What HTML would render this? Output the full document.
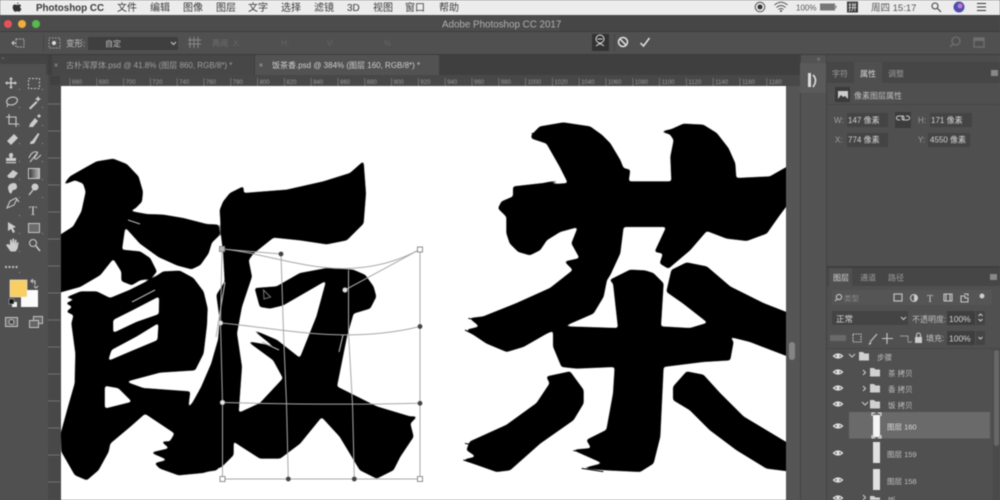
<!DOCTYPE html>
<html lang="zh">
<head>
<meta charset="utf-8">
<title>Adobe Photoshop CC 2017</title>
<style>
html,body{margin:0;padding:0;width:1000px;height:500px;overflow:hidden;background:#535353}
svg{display:block;filter:blur(.55px)}
text{font-family:"Liberation Sans","Noto Sans CJK SC",sans-serif;font-size:8.5px;fill:#c0c0c0}
.m{font-size:10px;fill:#3a3a3a}
.d{fill:#8a8a8a}
.r{font-size:6px;fill:#9a9a9a}
.i{fill:none;stroke:#c8c8c8;stroke-width:1.1}
.f{fill:#cccccc}
.e{fill:none;stroke:#e0e0e0;stroke-width:1.2}
</style>
</head>
<body>
<svg width="1000" height="500" viewBox="0 0 1000 500" xmlns="http://www.w3.org/2000/svg">
<defs>
<g id="eye"><path class="e" d="M-4.500 0Q0 -4 4.500 0Q0 4 -4.500 0Z"/><circle r="1.600" fill="#e0e0e0"/></g>
<g id="folder"><path fill="#d0d0d0" d="M0 0h4l1.500 1.500H10v7H0Z"/></g>
<clipPath id="cv"><rect x="61" y="86" width="725" height="414"/></clipPath>
<linearGradient id="g1" x1="0" x2="1"><stop offset="0" stop-color="#333"/><stop offset="1" stop-color="#bbb"/></linearGradient>
<filter id="ink" filterUnits="userSpaceOnUse" x="40" y="70" width="770" height="450" color-interpolation-filters="sRGB">
 <feGaussianBlur stdDeviation="1.300"/>
 <feComponentTransfer>
  <feFuncR type="linear" slope="4" intercept="-1.500"/>
  <feFuncG type="linear" slope="4" intercept="-1.500"/>
  <feFuncB type="linear" slope="4" intercept="-1.500"/>
 </feComponentTransfer>
</filter>
</defs>

<!-- base -->
<rect width="1000" height="500" fill="#535353"/>

<!-- menu bar -->
<rect width="1000" height="15" fill="#ececec"/>
<path fill="#333" d="M17 3.500c.8-.9 1.300-1 1.500-1.300 .1 1-.5 1.700-1.300 1.900ZM14.800 4.500c1 0 1.500.5 2.300.5s1.300-.5 2.300-.5c.7 0 1.300.3 1.700.9-1.400.9-1.200 2.900.3 3.500-.4 1.200-1.300 2.800-2.300 2.800-.7 0-1-.4-1.900-.4s-1.200.4-1.900.4c-1.300 0-2.600-2.500-2.600-4.300 0-1.900 1.100-3 2.100-3Z"/>
<text x="36" y="11" class="m" style="font-weight:bold;font-size:9.800px">Photoshop CC</text>
<text x="117" y="11" class="m">文件</text>
<text x="150" y="11" class="m">编辑</text>
<text x="183" y="11" class="m">图像</text>
<text x="216" y="11" class="m">图层</text>
<text x="248" y="11" class="m">文字</text>
<text x="281" y="11" class="m">选择</text>
<text x="314" y="11" class="m">滤镜</text>
<text x="347" y="11" class="m">3D</text>
<text x="373" y="11" class="m">视图</text>
<text x="405" y="11" class="m">窗口</text>
<text x="439" y="11" class="m">帮助</text>

<circle cx="760" cy="7" r="4.800" fill="none" stroke="#555"/><circle cx="760" cy="7" r="2.500" fill="#333"/>
<path fill="none" stroke="#555" d="M774.500 5Q781 -.5 787.500 5M776.500 7.500Q781 3.500 785.500 7.500M778.500 9.500Q781 7.500 783.500 9.500"/><circle cx="781" cy="11" r="1" fill="#444"/>
<text x="796" y="10.500" style="font-size:8px;fill:#555">100%</text>
<rect x="820" y="3.500" width="15" height="7" fill="#777"/><rect x="835.500" y="5.500" width="1" height="3" fill="#777"/>
<rect x="847" y="1.500" width="11" height="11" fill="#3a3a3a"/><text x="848" y="10.500" style="font-size:9px;fill:#eee">拼</text>
<text x="871" y="11" style="font-size:9.500px;fill:#555">周四 15:17</text>
<circle cx="935" cy="6" r="3" fill="none" stroke="#444" stroke-width="1.100"/><path stroke="#444" stroke-width="1.200" d="M937.500 8.500L941 12"/>
<circle cx="959" cy="7" r="5.500" fill="#4b4fb0"/><circle cx="960" cy="6" r="2.500" fill="#c678c8"/>
<path stroke="#333" stroke-width="1.100" d="M977 3.500h9M977 7h9M977 10.500h9"/>

<!-- title bar -->
<rect y="15" width="1000" height="16" fill="#464646"/>
<rect y="15" width="560" height="16" fill="#4c4c4c"/>
<circle cx="8" cy="24" r="4" fill="#e8505a"/>
<circle cx="22" cy="24" r="4" fill="#f0ae3c"/>
<circle cx="36" cy="24" r="4" fill="#58b94c"/>
<text x="442" y="27.500" style="font-size:9.800px;fill:#b0b0b0">Adobe Photoshop CC 2017</text>

<!-- options bar -->
<rect y="31" width="1000" height="24" fill="#505050"/>
<rect y="31" width="1000" height="1" fill="#3c3c3c"/>
<rect y="54" width="1000" height="1" fill="#3c3c3c"/>
<path fill="none" stroke="#aaa" stroke-dasharray="2 1" d="M16 39h8v8h-8Z"/><path fill="none" stroke="#ccc" d="M12 43h4M14 41l-2 2 2 2"/>
<rect x="43" y="34" width="1" height="18" fill="#444"/>
<rect x="49" y="38" width="11" height="10" fill="none" stroke="#aaa" stroke-dasharray="1.500 1.500"/><circle cx="54" cy="43" r="2" fill="#ddd"/>
<text x="66" y="46.500" style="font-size:8.500px">变形:</text>
<rect x="88" y="37" width="90" height="13" fill="#3f3f3f"/>
<text x="105" y="46.500" style="font-size:8px">自定</text>
<path class="i" d="M171 42l2.500 2.500 2.500-2.500"/>
<path stroke="#888" fill="none" d="M190 37v11M194 37v11M198 37v11M188 40h13M188 44h13"/>
<text x="212" y="46" style="font-size:8px;fill:#707070">再阅</text>
<text x="233" y="46" style="font-size:8px;fill:#666">X:</text>
<text x="281" y="46" style="font-size:8px;fill:#666">H:</text>
<text x="327" y="46" style="font-size:8px;fill:#666">V:</text>
<text x="384" y="46" style="font-size:8px;fill:#666">%</text>
<rect x="592" y="34" width="17" height="17" fill="#333"/>
<circle cx="600" cy="39" r="4" fill="none" stroke="#ddd"/><path stroke="#ddd" fill="none" d="M596 46l3-2 2 0 3 2M597.500 39h5"/>
<circle cx="623" cy="42" r="4.500" fill="none" stroke="#e4e4e4" stroke-width="1.500"/><path stroke="#e4e4e4" stroke-width="1.500" d="M620 39l6 6"/>
<path fill="none" stroke="#e4e4e4" stroke-width="1.500" d="M640.500 43l3 3 6-8"/>
<rect x="614" y="34" width="1" height="17" fill="#444"/>
<circle cx="956" cy="41" r="4" fill="none" stroke="#6f6f6f" stroke-width="1.300"/><path stroke="#6f6f6f" stroke-width="1.300" d="M953 44l-3 3"/>
<rect x="974" y="38" width="10" height="9" fill="none" stroke="#6f6f6f" stroke-width="1.300"/><rect x="974" y="38" width="10" height="3" fill="#6f6f6f"/>

<!-- doc tab row -->
<rect y="55" width="800" height="20" fill="#3f3f3f"/>
<rect y="55" width="48" height="20" fill="#444"/>
<rect y="64" width="46" height="11" fill="#505050"/>
<rect x="52" y="55" width="202" height="20" fill="#474747"/>
<rect x="255" y="55" width="184" height="20" fill="#525252"/>
<text x="54" y="67.500" style="font-size:7px;fill:#aaa">×</text>
<text x="66" y="68" style="font-size:8px;fill:#a0a0a0">古朴浑厚体.psd @ 41.8% (图层 860, RGB/8*) *</text>
<text x="259" y="67.500" style="font-size:7px;fill:#bbb">×</text>
<text x="272" y="68" style="font-size:8px;fill:#d0d0d0">饭茶香.psd @ 384% (图层 160, RGB/8*) *</text>
<text x="2" y="62" style="font-size:6px;fill:#999">"</text>

<!-- rulers -->
<rect x="48" y="75" width="752" height="11" fill="#484848"/>
<rect x="48" y="86" width="13" height="414" fill="#484848"/>
<rect x="50" y="76" width="10" height="9" fill="#404040"/>
<g stroke="#727272">
<path d="M70 78v8M96.800 78v8M123.600 78v8M150.400 78v8M177.200 78v8M204 78v8M230.800 78v8M257.600 78v8M284.400 78v8M311.200 78v8M338 78v8M364.800 78v8M391.600 78v8M418.400 78v8M445.200 78v8M472 78v8M498.800 78v8M525.600 78v8M552.400 78v8M579.200 78v8M606 78v8M632.800 78v8M659.600 78v8M686.400 78v8M713.200 78v8M740 78v8M766.800 78v8"/>
<path d="M48 104h12M48 131h12M48 158h12M48 185h12M48 212h12M48 239h12M48 266h12M48 293h12M48 320h12M48 347h12M48 374h12M48 401h12M48 428h12M48 455h12M48 482h12"/>
</g>
<g>
<text class="r" x="72" y="84">660</text><text class="r" x="98.800" y="84">680</text><text class="r" x="125.600" y="84">700</text><text class="r" x="152.400" y="84">720</text><text class="r" x="179.200" y="84">740</text><text class="r" x="206" y="84">760</text><text class="r" x="232.800" y="84">780</text><text class="r" x="259.600" y="84">800</text><text class="r" x="286.400" y="84">820</text><text class="r" x="313.200" y="84">840</text><text class="r" x="340" y="84">860</text><text class="r" x="366.800" y="84">880</text><text class="r" x="393.600" y="84">900</text><text class="r" x="420.400" y="84">920</text><text class="r" x="447.200" y="84">940</text><text class="r" x="474" y="84">960</text><text class="r" x="500.800" y="84">980</text><text class="r" x="527.600" y="84">1000</text><text class="r" x="554.400" y="84">1020</text><text class="r" x="581.200" y="84">1040</text><text class="r" x="608" y="84">1060</text><text class="r" x="634.800" y="84">1080</text><text class="r" x="661.600" y="84">1100</text><text class="r" x="688.400" y="84">1120</text><text class="r" x="715.200" y="84">1140</text><text class="r" x="742" y="84">1160</text><text class="r" x="768.800" y="84">1180</text>
</g>

<!-- canvas -->
<g clip-path="url(#cv)">
<g filter="url(#ink)">
 <rect x="40" y="70" width="770" height="450" fill="#fff"/>
 <!-- left character: upper-left strokes and radical -->
 <g transform="translate(60 155) scale(.33333)" fill="#000" stroke="#000" stroke-width="2" stroke-linejoin="round">
  <polygon points="12,88 30,65 70,42 110,20 160,12 200,28 235,65 248,110 245,140 225,160 205,168 260,178 310,180 370,190 440,208 475,210 478,240 455,262 445,295 420,330 395,342 350,330 295,305 240,265 195,215 185,285 240,290 270,310 290,350 270,370 240,375 215,390 185,378 185,350 160,310 120,360 60,395 -30,420 -30,260 40,215 65,170 78,110 70,85 45,75"/>
  <polygon points="62,410 110,410 150,430 210,405 280,370 310,350 360,348 400,370 430,410 442,460 440,510 430,595 405,645 300,652 195,680 250,700 390,710 383,765 400,740 425,695 455,625 475,555 520,700 520,900 485,935 430,953 355,960 300,940 285,925 325,915 275,893 330,880 305,860 330,860 345,835 300,805 255,775 210,815 150,865 145,890 115,945 80,975 45,960 5,890 3,835 25,755 45,685 47,595 35,505 42,480 20,470 40,455 18,445 50,432 18,428"/>
  <g fill="#fff" stroke="#fff" stroke-width="1">
   <polygon points="160,495 220,465 297,425 296,477 230,500 160,533"/>
   <polygon points="145,617 155,585 230,545 295,505 292,555 220,585"/>
   <polygon points="135,693 175,700 215,740 135,760"/>
  </g>
 </g>
 <!-- left character: right component -->
 <g transform="translate(60 150) scale(.33333)" fill="#000" stroke="#000" stroke-width="2" stroke-linejoin="round">
  <polygon points="480,180 490,155 510,130 550,110 550,130 680,120 790,95 870,70 910,35 917,130 910,220 860,270 800,282 720,270 640,262 580,310 565,330 575,380 545,470 530,550 545,650 535,790 600,760 670,685 640,630 565,575 620,585 655,600 580,540 650,570 720,625 770,500 800,390 670,465 630,475 600,470 585,415 650,410 720,370 800,355 880,360 915,375 940,410 948,440 930,475 880,490 860,560 840,660 830,710 950,770 1050,800 1070,800 1050,820 1060,860 1020,920 1000,960 950,985 900,960 840,860 785,800 720,880 660,925 600,925 530,880 510,860 470,960 400,970 395,775 425,710 455,640 475,570 480,510 470,435 495,395 490,305 485,265"/>
 </g>
 <!-- right character -->
 <g transform="translate(450 110) scale(.33333)" fill="#000" stroke="#000" stroke-width="2" stroke-linejoin="round">
  <polygon points="245,75 270,50 340,38 420,50 455,75 480,100 510,150 520,175 540,180 535,215 665,215 662,140 672,90 660,72 635,65 665,58 700,42 760,45 800,70 835,115 855,160 858,205 960,200 1030,160 1030,260 985,320 950,370 890,392 830,385 770,362 720,420 655,475 630,460 640,430 615,425 650,350 520,350 510,430 480,495 470,510 460,560 430,610 350,645 290,670 220,710 170,725 110,700 50,660 90,650 60,625 100,620 200,580 300,535 370,480 345,455 390,445 365,400 385,350 330,365 290,390 270,420 240,435 205,425 180,400 170,370 170,320 145,295 155,275 190,260 190,230 280,220 330,210 290,225 355,220 330,170 290,100 245,85"/>
  <polygon points="310,665 350,650 505,655 490,520 480,510 540,480 585,482 610,490 640,520 632,650 720,655 770,640 810,650 850,695 840,750 760,755 640,770 630,980 610,1060 570,1085 470,1080 400,1075 460,1060 370,1020 425,1015 410,990 470,960 490,850 495,770 380,775 335,770 310,710"/>
  <polygon points="650,545 665,480 710,458 770,470 840,530 940,580 1030,615 1030,745 900,695 840,680 770,635 700,580"/>
  <polygon points="290,800 360,785 400,840 400,880 370,930 270,1000 180,1080 140,1085 40,1050 80,1040 50,1020 60,995 170,945 260,880 300,820"/>
  <polygon points="670,830 710,785 760,795 810,850 880,920 1030,1010 1030,1085 950,1075 860,1020 780,960 720,900 670,870"/>
 </g>
</g>
 <!-- bristle ends -->
 <g stroke="#000" stroke-width=".8" fill="none" transform="translate(450 110) scale(.33333)">
  <path stroke-width="3" d="M45 660L95 685M55 625L110 635M245 70L300 78M40 1050L90 1065M45 1000L85 1008M370 1022L440 1030M395 1075L460 1085"/>
 </g>
 <!-- stray grey marks in the artwork -->
 <g stroke="#b8b8b8" stroke-width="1.100" fill="none">
  <path d="M128 220l12 4M132 302l23-12M225 282l-9 55M343 335l-4 17M262 342l17 8"/>
 </g>
 <!-- warp mesh -->
 <g fill="none" stroke="#a8a8a8" stroke-width="1">
  <path d="M222 249C281 254 345 290 420 249.300"/>
  <path d="M220.500 323C280 328 345 345 420 326.500"/>
  <path d="M222.500 402.500C280 404 350 405 420 403.300"/>
  <path d="M222.500 479H420"/>
  <path d="M222 249L220.500 323L222.500 402.500V479"/>
  <path d="M281 254L283.500 333L286.500 404L288.300 479"/>
  <path d="M348.500 270L348.500 333L352.500 404L354.300 479"/>
  <path d="M420 249.300V479"/>
  <path d="M222 249L281 254M420 249.300L345 290"/>
 </g>
 <g fill="#fff" stroke="#8e8e8e">
  <rect x="219.500" y="246.500" width="5" height="5" fill="#bbb"/>
  <rect x="417.500" y="247" width="5" height="5"/>
  <rect x="417.500" y="476.500" width="5" height="5"/>
  <rect x="220" y="476.500" width="5" height="5"/>
 </g>
 <g fill="#444">
  <circle cx="281" cy="254" r="2.400"/><circle cx="420" cy="326.500" r="2.400"/><circle cx="420" cy="403.300" r="2.400"/><circle cx="288.300" cy="479" r="2.400"/><circle cx="354.300" cy="479" r="2.400"/>
 </g>
 <g fill="#e4e4e4" stroke="#999" stroke-width=".6">
  <circle cx="220.500" cy="323" r="2.400"/><circle cx="222.500" cy="402.500" r="2.400"/><circle cx="345" cy="290" r="2.400"/>
 </g>
 <path fill="none" stroke="#777" d="M263.500 290l7 7-6.500 2Z"/>
</g>

<!-- right canvas scroll gutter -->
<rect x="786" y="86" width="14" height="414" fill="#555"/>
<rect x="800" y="55" width="1" height="445" fill="#424242"/>
<rect x="789" y="342" width="6" height="18" rx="3" fill="#858585"/>

<!-- left toolbar -->
<rect x="0" y="75" width="48" height="425" fill="#505050"/>
<g>
 <path class="f" d="M11 77l2 2.200h-1.300v3h3V81L17 83l-2.300 2v-1.300h-3v3H13L11 89l-2-2.300h1.300v-3h-3V85L5 83l2.300-2v1.300h3v-3H9Z"/>
 <rect x="28.500" y="78.500" width="11" height="10" fill="none" stroke="#c8c8c8" stroke-dasharray="2 1.500"/>
 <ellipse cx="12" cy="101" rx="5.500" ry="3.800" transform="rotate(-15 12 101)" class="i"/><path class="i" d="M8 104l-1 3"/>
 <path class="f" d="M29 108l7-7 1.500 1.500-7 7ZM38 96l1 2 2 1-2 1-1 2-1-2-2-1 2-1Z"/>
 <path class="i" stroke-width="1.400" d="M9 114v10h10M6 117h10v10"/>
 <path class="f" d="M29 127l1-3 5-6 3 3-5 6ZM37 116l2-2 2 2-2 2Z"/>
 <path class="f" d="M7 141l7-7 4 4-7 7Z"/>
 <path class="f" d="M30 144c0-2 1-3 2-3l6-8 1.500 1-5 9c-1 1-3 1-4 1Z"/>
 <path class="f" d="M9 156c0-2 .5-3 2-3 2 0 2.200 1 2 3l-1 2h4v3H6v-3h4Z M6 162h10v1.200H6Z"/>
 <path class="i" d="M29 158c2-5 5-7 8-6 2 2-4 5-2 7 2 1 4-3 6-4M30 162l8-10"/>
 <path class="f" d="M7 176l6-6 5 3-4 5H9Z"/>
 <rect x="28.500" y="168.500" width="11" height="10" fill="url(#g1)" stroke="#c8c8c8"/>
 <path class="f" d="M8 188c0-3 3-5 6-5 2 0 3 2 3 4s-2 3-4 3l-2 4-2-2Z"/>
 <circle cx="35" cy="187" r="3.500" class="f"/><path stroke="#c8c8c8" stroke-width="1.400" d="M33 190l-4 5"/>
 <path class="i" d="M7 208l3-7 6-3 1 1-3 6-7 3ZM16 198l3 4"/>
 <text x="29" y="215" style="font-family:'Liberation Serif',serif;font-size:13px;fill:#d0d0d0">T</text>
 <path class="f" d="M8 222l8 5-3 1 2 4-2 1-2-4-3 2Z"/>
 <rect x="28.500" y="223.500" width="11" height="9" fill="#6c6c6c" stroke="#c4c4c4"/>
 <path class="f" d="M6 245l2-1 2 1v-5l1.500-.5.5 4 .5-5h1.500l.3 5 .8-4 1.500.5-.5 5 1-3 1.500.5-1 6-2 3h-5Z"/>
 <circle cx="33" cy="243" r="3.500" class="i"/><path stroke="#c8c8c8" stroke-width="1.600" d="M36 246l4 5"/>
 <path stroke="#c0c0c0" stroke-width="2" stroke-dasharray="2 1.500" d="M5 267h13"/>
 <g fill="#999">
  <rect x="19" y="89" width="1" height="1"/><rect x="42" y="89" width="1" height="1"/><rect x="19" y="107" width="1" height="1"/><rect x="42" y="107" width="1" height="1"/><rect x="19" y="125" width="1" height="1"/><rect x="42" y="125" width="1" height="1"/><rect x="19" y="143" width="1" height="1"/><rect x="42" y="143" width="1" height="1"/><rect x="19" y="161" width="1" height="1"/><rect x="42" y="161" width="1" height="1"/><rect x="19" y="179" width="1" height="1"/><rect x="42" y="179" width="1" height="1"/><rect x="19" y="197" width="1" height="1"/><rect x="42" y="197" width="1" height="1"/><rect x="19" y="215" width="1" height="1"/><rect x="19" y="233" width="1" height="1"/><rect x="42" y="233" width="1" height="1"/><rect x="19" y="251" width="1" height="1"/><rect x="19" y="272" width="1" height="1"/>
 </g>
 <rect x="21" y="290" width="17" height="17" fill="#fbfbfb"/>
 <rect x="10" y="280" width="17" height="17" fill="#f9cf63" stroke="#eee" stroke-width=".6"/>
 <path class="i" stroke-width=".9" d="M32 281h3v4M33 279l-2 2 2 2M38 286l-2 2-2-2"/>
 <rect x="12" y="302" width="5" height="5" fill="#eee"/><rect x="9" y="299" width="5" height="5" fill="#111" stroke="#ccc" stroke-width=".5"/>
 <rect x="5.500" y="317.500" width="12" height="9" fill="#6a6a6a" stroke="#c4c4c4"/><circle cx="11.500" cy="322" r="2.500" fill="#444" stroke="#bbb"/>
 <rect x="33.500" y="316.500" width="9" height="7" fill="#666" stroke="#c4c4c4"/><rect x="29.500" y="320.500" width="9" height="7" fill="#666" stroke="#c4c4c4"/>
</g>

<!-- dock -->
<rect x="801" y="55" width="25" height="445" fill="#535353"/>
<rect x="826" y="55" width="1" height="445" fill="#424242"/>
<rect x="800" y="63" width="26" height="30" fill="#5a5a5a"/>
<rect x="808" y="73" width="3" height="14" fill="#ddd"/><path fill="none" stroke="#ddd" stroke-width="1.600" d="M813 75q5 5 0 12"/>
<text x="817" y="61" style="font-size:6px;fill:#9a9a9a">«</text>
<text x="993" y="61" style="font-size:6px;fill:#9a9a9a">»</text>

<!-- properties panel -->
<rect x="827" y="55" width="173" height="213" fill="#4c4c4c"/>
<rect x="827" y="62" width="173" height="21" fill="#464646"/>
<rect x="854" y="62" width="28" height="21" fill="#4f4f4f"/>
<rect x="827" y="83" width="173" height="185" fill="#4f4f4f"/>
<text x="832" y="76.500" style="font-size:8px;fill:#9a9a9a">字符</text>
<text x="860" y="76.500" style="font-size:8px;fill:#d8d8d8">属性</text>
<text x="888" y="76.500" style="font-size:8px;fill:#9a9a9a">调整</text>
<rect x="991" y="70" width="7" height="6" fill="#888"/>
<rect x="835" y="87" width="15" height="15" fill="#3a3a3a"/>
<rect x="838" y="91" width="10" height="8" fill="#ccc"/><path fill="#3a3a3a" d="M838 99l3-4 2 2 2-1 3 3Z"/>
<text x="854" y="98.500" style="font-size:8px">像素图层属性</text>
<rect x="827" y="104" width="173" height="1" fill="#474747"/>
<text x="834" y="123" style="font-size:8px;fill:#a0a0a0">W:</text>
<rect x="847" y="113" width="41" height="14" fill="#444"/>
<text x="848" y="123" style="font-size:8px;fill:#d4d4d4">147 像素</text>
<rect x="895" y="112" width="16" height="16" fill="#3c3c3c"/>
<path class="i" stroke-width=".9" d="M900 120h-1.500a2 2 0 0 1 0-4H902a2 2 0 0 1 0 4M906 116h1.500a2 2 0 0 1 0 4H904a2 2 0 0 1 0-4"/>
<text x="918" y="123" style="font-size:8px;fill:#a0a0a0">H:</text>
<rect x="930" y="113" width="42" height="14" fill="#444"/>
<text x="931" y="123" style="font-size:8px;fill:#d4d4d4">171 像素</text>
<text x="835" y="142.500" style="font-size:8px;fill:#a0a0a0">X:</text>
<rect x="847" y="133" width="41" height="14" fill="#444"/>
<text x="848" y="142.500" style="font-size:8px;fill:#d4d4d4">774 像素</text>
<text x="918" y="142.500" style="font-size:8px;fill:#a0a0a0">Y:</text>
<rect x="928" y="133" width="42" height="14" fill="#444"/>
<text x="930" y="142.500" style="font-size:8px;fill:#d4d4d4">4550 像素</text>

<!-- layers panel -->
<rect x="827" y="266" width="173" height="2" fill="#3e3e3e"/>
<rect x="827" y="268" width="173" height="18" fill="#464646"/>
<rect x="829" y="268" width="23" height="18" fill="#505050"/>
<rect x="827" y="286" width="173" height="214" fill="#505050"/>
<text x="833" y="280.500" style="font-size:8px;fill:#d8d8d8">图层</text>
<text x="860" y="280.500" style="font-size:8px;fill:#9a9a9a">通道</text>
<text x="888" y="280.500" style="font-size:8px;fill:#9a9a9a">路径</text>
<rect x="990" y="274" width="7" height="6" fill="#888"/>
<rect x="832" y="290" width="160" height="15" fill="#555"/>
<circle cx="839" cy="297" r="2.600" class="i"/><path class="i" d="M837 299l-2 2"/>
<text x="844" y="301" style="font-size:7.500px;fill:#8c8c8c">类型</text>
<rect x="894" y="294" width="8" height="7" class="i"/>
<circle cx="914" cy="298" r="3.500" class="i"/><path class="f" d="M914 294.500a3.500 3.500 0 0 1 0 7Z"/>
<text x="927" y="302" style="font-family:'Liberation Serif',serif;font-size:10px;fill:#c8c8c8">T</text>
<path class="i" d="M944 294h8v7h-8ZM946 294v7M950 294v7"/>
<path class="i" d="M961 296h4v2h3v4h-7ZM964 294h4v2"/>
<circle cx="982" cy="296" r="2.500" fill="#ccc"/>
<rect x="832" y="311" width="76" height="14" fill="#444"/>
<text x="836" y="322" style="font-size:8.500px;fill:#d4d4d4">正常</text>
<path class="i" d="M901 317l2.500 2.500 2.500-2.500"/>
<text x="912" y="322" style="font-size:8px">不透明度:</text>
<rect x="947" y="311" width="28" height="14" fill="#3e3e3e"/>
<text x="949" y="322" style="font-size:8.500px;fill:#d4d4d4">100%</text>
<rect x="976" y="311" width="9" height="14" fill="#444"/>
<path class="i" stroke-width=".8" d="M978.500 319l2 2 2-2M978.500 316l2-2 2 2"/>
<rect x="830" y="335" width="16" height="6" fill="#6a6a6a"/>
<path class="i" stroke-dasharray="1.500 1" d="M853 334h8v8h-8Z"/>
<path class="i" d="M870 342l7-8"/><path class="f" d="M868.500 344l2-2 1 1-2 2Z"/>
<path class="i" d="M887 333v11M882 338.500h11"/>
<path fill="none" stroke="#999" d="M900 336h8v6M912 341a3 3 0 0 1-4 1"/>
<path class="f" d="M915 337h7v6h-7Z"/><path class="i" d="M916.500 337v-2a2 2 0 0 1 4 0v2"/>
<text x="926" y="341" style="font-size:8px">填充:</text>
<rect x="947" y="331" width="28" height="14" fill="#3e3e3e"/>
<text x="949" y="341.500" style="font-size:8.500px;fill:#d4d4d4">100%</text>
<rect x="976" y="331" width="9" height="14" fill="#444"/>
<path class="i" stroke-width=".8" d="M978.500 337l2 2 2-2"/>
<rect x="827" y="348" width="173" height="1" fill="#474747"/>

<use href="#eye" x="838" y="356"/>
<path class="i" d="M849 354l3 3 3-3"/>
<use href="#folder" transform="translate(859 352)"/>
<text x="877" y="360" style="font-size:7.500px">步骤</text>
<use href="#eye" x="838" y="372"/>
<path class="i" d="M863 370l2.500 2.500-2.500 2.500"/>
<use href="#folder" transform="translate(870 368)"/>
<text x="888" y="376" style="font-size:7.500px">茶 拷贝</text>
<use href="#eye" x="838" y="388"/>
<path class="i" d="M863 386l2.500 2.500-2.500 2.500"/>
<use href="#folder" transform="translate(870 384)"/>
<text x="888" y="392" style="font-size:7.500px">香 拷贝</text>
<use href="#eye" x="838" y="404"/>
<path class="i" d="M862 402l3 3 3-3"/>
<use href="#folder" transform="translate(870 400)"/>
<text x="888" y="408" style="font-size:7.500px">饭 拷贝</text>

<rect x="849" y="412" width="141" height="26.500" fill="#6a6a6a"/>
<use href="#eye" x="838" y="426"/>
<rect x="873" y="415" width="7" height="22" fill="#f4f4f4"/>
<path fill="none" stroke="#eee" d="M875 413h-3v3M878 413h3v3M875 438h-3v-3M878 438h3v-3"/>
<text x="887" y="429.500" style="font-size:7.500px;fill:#dcdcdc">图层 160</text>

<use href="#eye" x="838" y="453"/>
<rect x="873" y="442" width="7" height="21" fill="#e0e0e0"/>
<text x="887" y="457" style="font-size:7.500px">图层 159</text>
<use href="#eye" x="838" y="480"/>
<rect x="873" y="469" width="7" height="21" fill="#e0e0e0"/>
<text x="887" y="484" style="font-size:7.500px">图层 158</text>
<use href="#eye" x="838" y="498"/>
<path class="i" d="M863 495l2.500 2.500-2.500 2.500"/>
<use href="#folder" transform="translate(870 496)"/>
<text x="888" y="503" style="font-size:7.500px">饭</text>

<rect x="993" y="349" width="7" height="151" fill="#4a4a4a"/>
<rect x="994" y="350" width="5" height="96" rx="2.500" fill="#676767"/>
</svg>
</body>
</html>
